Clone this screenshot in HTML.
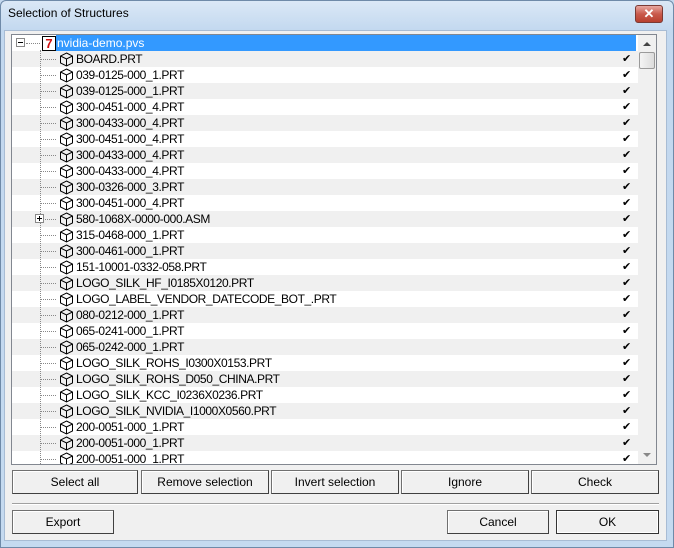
<!DOCTYPE html>
<html><head><style>
*{margin:0;padding:0;box-sizing:border-box}
body{width:674px;height:548px;overflow:hidden;background:#c5d9ef;font-family:"Liberation Sans",sans-serif;position:relative}
.frame{position:absolute;left:0;top:0;width:674px;height:548px;border:1px solid #6f8aa8;border-radius:6px 6px 0 0;background:linear-gradient(#dbe8f6,#c2d8ef 30px,#c5daf0)}
.title{position:absolute;left:8px;top:6px;font-size:12px;color:#000}
.close{position:absolute;left:635px;top:5px;width:28px;height:18px;border:1px solid #7a3a34;border-radius:3px;background:linear-gradient(#e8a8a0,#c95a4c 50%,#b8402f);color:#fff;font-weight:bold;font-size:13px;text-align:center;line-height:16px}
.client{position:absolute;left:4px;top:30px;width:663px;height:511px;background:#f0f0f0;border:1px solid #a8bcd4}
.tree{position:absolute;left:11px;top:34px;width:646px;height:431px;border:1px solid #828790;background:#fff;overflow:hidden}
.row{position:absolute;left:0;width:626px;height:16px;font-size:12px;line-height:16px}
.row.g{background:#f0f0f0}
.row .t{position:absolute;left:64px;top:0;white-space:nowrap;letter-spacing:-0.4px}
.row .ck{position:absolute;left:610px;top:0;font-size:11px}
.row .cube{position:absolute;left:47px;top:1px}
.row .h{position:absolute;left:29px;top:8px;width:15px;border-top:1px dotted #888}
.vl{position:absolute;left:28px;top:15px;height:420px;border-left:1px dotted #888}
.sb{position:absolute;left:626px;top:0;width:18px;height:429px;background:#f0f0f0}
.btn{position:absolute;height:24px;border:1px solid #707070;border-right-color:#404040;border-bottom-color:#404040;background:#f0f0f0;box-shadow:inset 1px 1px 0 #fff;font-size:12px;text-align:center;line-height:22px}
</style></head><body>
<div class="frame"></div>
<div class="title">Selection of Structures</div>
<div class="close">✕</div>
<div class="client"></div>
<div class="tree">
<div id="rows"></div>
<div class="vl"></div>
<div class="row" style="top:0px">
 <div style="position:absolute;left:4px;top:3px;width:9px;height:9px;border:1px solid #888;background:#fff"><div style="position:absolute;left:1px;top:3px;width:5px;height:1px;background:#000"></div></div>
 <div style="position:absolute;left:14px;top:8px;width:14px;border-top:1px dotted #888"></div>
 <div style="position:absolute;left:30px;top:1px;width:14px;height:15px;border:1px solid #000;background:#fff;color:#d01010;font-weight:bold;font-size:13px;line-height:13px;text-align:center">7</div>
 <div style="position:absolute;left:44px;top:0;width:580px;height:16px;background:#3399ff;color:#fff;padding-left:1px">nvidia-demo.pvs</div>
</div>
<div class="sb">
 <div style="position:absolute;left:5px;top:7px;border-left:4px solid transparent;border-right:4px solid transparent;border-bottom:4px solid #444"></div>
 <div style="position:absolute;left:1px;top:17px;width:16px;height:17px;border:1px solid #9a9a9a;border-radius:2px;background:linear-gradient(90deg,#f4f4f4,#dcdcdc)"></div>
 <div style="position:absolute;left:5px;top:418px;border-left:4px solid transparent;border-right:4px solid transparent;border-top:4px solid #888"></div>
</div>
</div>
<div class="btn" style="left:12px;top:470px;width:126px">Select all</div>
<div class="btn" style="left:141px;top:470px;width:128px">Remove selection</div>
<div class="btn" style="left:271px;top:470px;width:128px">Invert selection</div>
<div class="btn" style="left:401px;top:470px;width:128px">Ignore</div>
<div class="btn" style="left:531px;top:470px;width:128px">Check</div>
<div style="position:absolute;left:12px;top:503px;width:647px;border-top:1px solid #a0a0a0;border-bottom:1px solid #fff"></div>
<div class="btn" style="left:12px;top:510px;width:102px">Export</div>
<div class="btn" style="left:447px;top:510px;width:102px">Cancel</div>
<div class="btn" style="left:556px;top:510px;width:103px;border:1px solid #333;box-shadow:inset 0 0 0 1px #fff">OK</div>
<script>
(function(){
var n=["BOARD.PRT","039-0125-000_1.PRT","039-0125-000_1.PRT","300-0451-000_4.PRT","300-0433-000_4.PRT","300-0451-000_4.PRT","300-0433-000_4.PRT","300-0433-000_4.PRT","300-0326-000_3.PRT","300-0451-000_4.PRT","580-1068X-0000-000.ASM","315-0468-000_1.PRT","300-0461-000_1.PRT","151-10001-0332-058.PRT","LOGO_SILK_HF_I0185X0120.PRT","LOGO_LABEL_VENDOR_DATECODE_BOT_.PRT","080-0212-000_1.PRT","065-0241-000_1.PRT","065-0242-000_1.PRT","LOGO_SILK_ROHS_I0300X0153.PRT","LOGO_SILK_ROHS_D050_CHINA.PRT","LOGO_SILK_KCC_I0236X0236.PRT","LOGO_SILK_NVIDIA_I1000X0560.PRT","200-0051-000_1.PRT","200-0051-000_1.PRT","200-0051-000_1.PRT"];
var cube='<svg class="cube" width="15" height="15" viewBox="0 0 15 15"><path d="M7.5 1L13.5 4V11L7.5 14L1.5 11V4Z M1.5 4L7.5 7L13.5 4 M7.5 7V14" fill="none" stroke="#000" stroke-width="1"/></svg>';
var h="";
for(var i=0;i<n.length;i++){
 var y=16+16*i;
 var pl=i==10?'<div style="position:absolute;left:23px;top:3px;width:9px;height:9px;border:1px solid #888;background:#fff;z-index:2"><div style="position:absolute;left:1px;top:3px;width:5px;height:1px;background:#000"></div><div style="position:absolute;left:3px;top:1px;width:1px;height:5px;background:#000"></div></div>':'';
 h+='<div class="row'+(i%2==0?' g':'')+'" style="top:'+y+'px"><div class="h"></div>'+pl+cube+'<span class="t">'+n[i]+'</span><span class="ck">✔</span></div>';
}
document.getElementById("rows").innerHTML=h;
})();
</script>
</body></html>
